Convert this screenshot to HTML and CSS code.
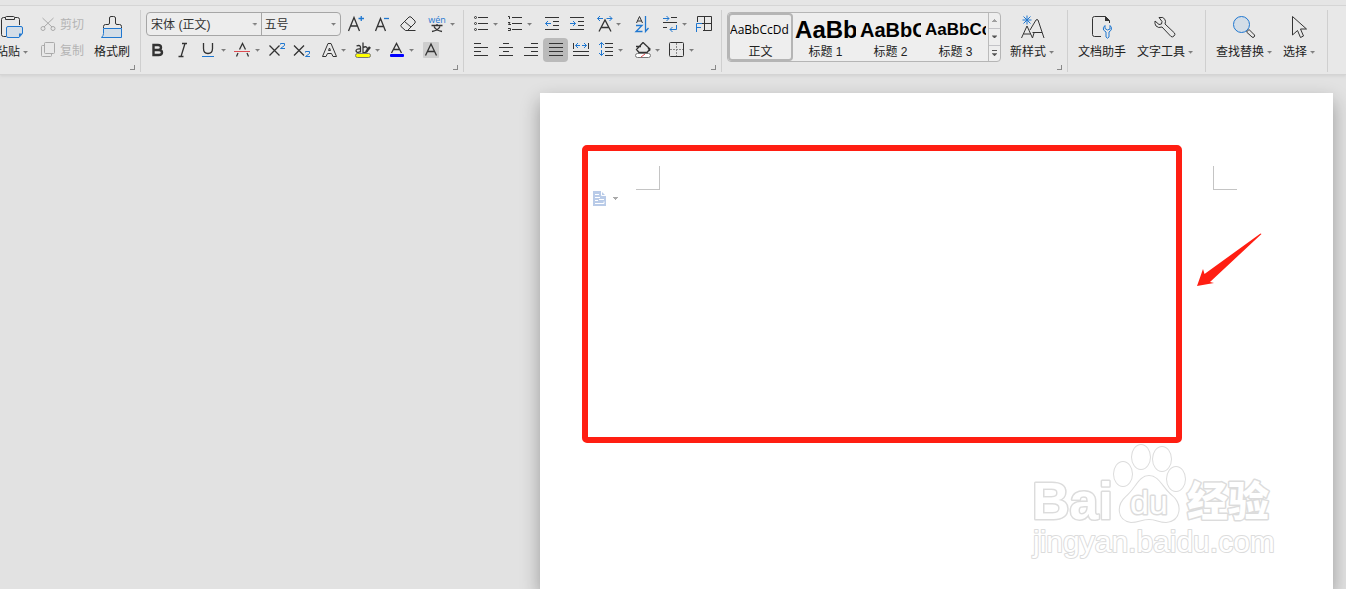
FILE: index.html
```html
<!DOCTYPE html>
<html lang="zh-CN">
<head>
<meta charset="utf-8">
<meta name="viewport" content="width=device-width, initial-scale=1">
<title>文字文稿</title>
<link rel="stylesheet" href="styles.css">
</head>
<body>
<header class="ribbon">
  <section class="group group-clipboard" aria-label="剪贴板">
    <button class="big paste" type="button">
      <svg class="icon-big" viewBox="0 0 24 24"><path d="M5.500 2.500H3.500Q1.500 2.500 1.500 4.500V19.500Q1.500 21.500 3.500 21.500H6M15 2.500H17.500Q19.500 2.500 19.500 4.500V10"/><path d="M5.500 4.500V2.500Q5.500 1.500 6.500 1.500H13.500Q14.500 1.500 14.500 2.500V4.500Z"/><path class="blue tint" d="M8 11.500H21Q22.500 11.500 22.500 13V18.500L19 22.500H8Q6.500 22.500 6.500 21V13Q6.500 11.500 8 11.500Z"/><path class="blue-fill" d="M19 22.500V18.500H22.500Z"/></svg>
      <span class="label">粘贴<i class="caret"></i></span>
    </button>
    <div class="rows">
      <button class="text-tool" type="button" disabled>
        <svg class="icon" viewBox="0 0 20 20"><path d="M4.500 4L14 13M15.500 4L6 13"/><circle cx="5" cy="14.500" r="2"/><circle cx="15" cy="14.500" r="2"/></svg><span>剪切</span>
      </button>
      <button class="text-tool" type="button" disabled>
        <svg class="icon" viewBox="0 0 20 20"><rect x="6.500" y="2.500" width="10" height="11" rx="1"/><path d="M6 5.500H4.500Q3.500 5.500 3.500 6.500V15.500Q3.500 16.500 4.500 16.500H12.500Q13.500 16.500 13.500 15.500V14"/></svg><span>复制</span>
      </button>
    </div>
    <button class="big" type="button">
      <svg class="icon-big" viewBox="0 0 24 24"><path d="M3.500 13V11.500Q3.500 9.500 5.500 9.500H8Q9.500 9.500 9.500 8V3Q9.500 1.500 11 1.500H13.500Q15.500 1.500 15.500 3V8Q15.500 9.500 17 9.500H19.500Q21.500 9.500 21.500 11.500V13"/><path class="blue tint" d="M3.500 13.500H21.500V22.500H1.500Q3.500 20.500 3.500 18.500Z"/></svg>
      <span class="label">格式刷</span>
    </button>
    <button class="launcher" type="button" aria-label="剪贴板选项"></button>
  </section>

  <section class="group group-font" aria-label="字体">
    <div class="rows">
      <div class="row">
        <div class="combo">
          <label class="field field-name"><select aria-label="字体"><option>宋体 (正文)</option></select><i class="caret"></i></label>
          <label class="field field-size"><select aria-label="字号"><option>五号</option></select><i class="caret"></i></label>
        </div>
        <button class="tool" type="button" aria-label="增大字号"><svg class="icon" viewBox="0 0 20 20"><path class="thick" d="M2.500 17L8 3.500L13.500 17M4.500 12H11.500"/><path class="blue thick" d="M12.500 4.500H18M15.250 2V7"/></svg></button>
        <button class="tool" type="button" aria-label="减小字号"><svg class="icon" viewBox="0 0 20 20"><path class="thick" d="M3.500 17L8.500 4.500L13.500 17M5.500 12.500H11.500"/><path class="blue thick" d="M12 4.500H17"/></svg></button>
        <button class="tool" type="button" aria-label="清除格式"><svg class="icon" viewBox="0 0 20 20"><path d="M3 11L11 3Q12 2.500 13 3L17 7Q17.500 8 17 9L9.500 16.500H7.500L3 12.500Q2.500 11.500 3 11ZM6.500 7.500L13 13M8 16.500H17.500"/></svg></button>
        <button class="tool tool-wide" type="button" aria-label="拼音指南"><svg class="icon" viewBox="0 0 24 20"><text class="pinyin" x="13" y="9" text-anchor="middle">wén</text><path class="thick" d="M7.500 11.500H18.500M13 10V12M10 12.500Q12 16.500 18 17.500M16 12.500Q14 16.500 8 17.500"/></svg><i class="caret"></i></button>
      </div>
      <div class="row">
        <button class="tool" type="button" aria-label="加粗"><svg class="icon" viewBox="0 0 20 20"><path class="bold" d="M6.500 5H11Q14 5 14 7.500T11 10H6.500ZM6.500 10H11.500Q15 10 15 12.500T11.500 15H6.500Z"/></svg></button>
        <button class="tool" type="button" aria-label="倾斜"><svg class="icon" viewBox="0 0 20 20"><path class="thick" d="M9 3.500H14M5.500 16.500H10.500M12 3.500L8 16.500"/></svg></button>
        <button class="tool" type="button" aria-label="下划线"><svg class="icon" viewBox="0 0 20 20"><path class="thick" d="M4.500 3V8.500Q4.500 13.500 9 13.500T13.500 8.500V3"/><path class="blue" d="M3 16.500H15"/></svg><i class="caret"></i></button>
        <button class="tool" type="button" aria-label="删除线"><svg class="icon" viewBox="0 0 20 20"><path class="thick" d="M6.500 9.500L9.500 3.500L12.500 9.500M5 13L3.500 16.500M14 13L15.500 16.500"/><path class="red" d="M1 11.500H17"/></svg><i class="caret"></i></button>
        <button class="tool" type="button" aria-label="上标"><svg class="icon" viewBox="0 0 20 20"><path class="thick" d="M2.500 5.500L12.500 15.500M12.500 5.500L2.500 15.500"/><path class="blue" d="M13.500 4.500V3.500H17.500V5.500L13.500 8.500H18"/></svg></button>
        <button class="tool" type="button" aria-label="下标"><svg class="icon" viewBox="0 0 20 20"><path class="thick" d="M1 5.500L11 15.500M11 5.500L1 15.500"/><path class="blue" d="M12.500 12.500V11.500H16.500V13.500L12.500 16.500H17"/></svg></button>
        <button class="tool" type="button" aria-label="文字效果"><svg class="icon" viewBox="0 0 20 20"><path d="M3.500 16.500L9 3.500H12L17.500 16.500H14L12.500 13.500H8.500L7 16.500ZM9.500 10.500L10.500 8L11.500 10.500Z"/></svg><i class="caret"></i></button>
        <button class="tool" type="button" aria-label="突出显示"><svg class="icon" viewBox="0 0 20 20"><path class="thick" d="M3.500 6Q7.500 4.500 7.500 7.500V12.500M7.500 9Q3 8.500 3 11Q4 13.500 7.500 11.500M10 2.500V12.500Q14.500 13 14.500 9Q14 5.500 10 7.500"/><path class="bold" d="M13 12L17 7"/><rect class="mark" x="2.500" y="13.500" width="15" height="4" rx="2"/></svg><i class="caret"></i></button>
        <button class="tool" type="button" aria-label="字体颜色"><svg class="icon" viewBox="0 0 20 20"><path class="thick" d="M4.500 13L9.500 3.500L14.500 13M6.500 9.500H12.500"/><rect class="ink" x="3" y="14" width="14" height="3" rx="1"/></svg><i class="caret"></i></button>
        <button class="tool" type="button" aria-label="字符底纹"><svg class="icon" viewBox="0 0 20 20"><rect class="shade" x="2" y="2" width="16" height="16" rx="1"/><path class="thick" d="M4.500 15.500L10 4L15.500 15.500M6.500 11.500H13.500"/></svg></button>
      </div>
    </div>
    <button class="launcher" type="button" aria-label="字体选项"></button>
  </section>

  <section class="group group-para" aria-label="段落">
    <div class="rows">
      <div class="row">
        <button class="tool" type="button" aria-label="项目符号"><svg class="icon" viewBox="0 0 20 20"><path d="M7 3.500H17M7 9.500H17M7 15.500H17"/><circle cx="4.500" cy="3.500" r="1"/><circle cx="4.500" cy="9.500" r="1"/><circle cx="4.500" cy="15.500" r="1"/></svg><i class="caret"></i></button>
        <button class="tool" type="button" aria-label="编号"><svg class="icon" viewBox="0 0 20 20"><path d="M7 3.500H17M7 9.500H17M7 15.500H17M3 2.500H4.500V5M3 8.500H5L3.500 10.500H6M3 14.500H5.500V16.500H3"/></svg><i class="caret"></i></button>
        <button class="tool apart" type="button" aria-label="减少缩进"><svg class="icon" viewBox="0 0 20 20"><path d="M3 3.500H17M11 7.500H17M11 11.500H17M3 15.500H17"/><path class="blue" d="M3.500 9.500H9M6 7L3.500 9.500L6 12"/></svg></button>
        <button class="tool" type="button" aria-label="增加缩进"><svg class="icon" viewBox="0 0 20 20"><path d="M2 3.500H16M10 7.500H16M10 11.500H16M2 15.500H16"/><path class="blue" d="M2 9.500H7.500M5 7L7.500 9.500L5 12"/></svg></button>
        <button class="tool" type="button" aria-label="中文版式"><svg class="icon" viewBox="0 0 20 20"><path class="thick" d="M5 17.500L11 6L17 17.500M7 13.500H15"/><path class="blue" d="M3.500 4.500H9M6 2L3.500 4.500L6 7M12.500 4.500H18M15.500 2L18 4.500L15.500 7"/></svg><i class="caret"></i></button>
        <button class="tool apart" type="button" aria-label="排序"><svg class="icon" viewBox="0 0 20 20"><path d="M5.500 9L8.500 2.500L11.500 9M6.500 7H10.500"/><path class="blue thick" d="M5 11.500H11L5 17.500H11.500M14.500 2V17.500L17.500 14"/></svg></button>
        <button class="tool apart" type="button" aria-label="显示标记"><svg class="icon" viewBox="0 0 20 20"><path d="M11 3.500H17M3 8.500H17M3 13.500H7"/><path class="blue" d="M3 4.500H9M6.500 2L9 4.500L6.500 7M16.500 11V15.500H10M12.500 13L10 15.500L12.500 18"/></svg><i class="caret"></i></button>
        <button class="tool" type="button" aria-label="制表位"><svg class="icon" viewBox="0 0 20 20"><path d="M3.500 8V2.500H17.500V16.500H9M10.500 2.500V16.500M8 9.500H17.500"/><path class="blue" d="M2.500 18V9.500H8M2.500 13.500H7"/></svg></button>
      </div>
      <div class="row">
        <button class="tool narrow" type="button" aria-label="左对齐"><svg class="icon" viewBox="0 0 20 20"><path d="M3 3.500H10M3 7.500H17M3 11.500H10M3 15.500H17"/></svg></button>
        <button class="tool narrow" type="button" aria-label="居中"><svg class="icon" viewBox="0 0 20 20"><path d="M7 3.500H13M3 7.500H17M7 11.500H13M3 15.500H17"/></svg></button>
        <button class="tool narrow" type="button" aria-label="右对齐"><svg class="icon" viewBox="0 0 20 20"><path d="M10 3.500H17M3 7.500H17M10 11.500H17M3 15.500H17"/></svg></button>
        <button class="tool narrow active" type="button" aria-label="两端对齐" aria-pressed="true"><svg class="icon" viewBox="0 0 20 20"><path d="M3 3.500H17M3 7.500H17M3 11.500H17M3 15.500H17"/></svg></button>
        <button class="tool narrow" type="button" aria-label="分散对齐"><svg class="icon" viewBox="0 0 20 20"><path d="M2.500 3V9M17.500 3V9M2 11.500H18M2 15.500H18"/><path class="blue" d="M4.500 5.500H9M7 3L4.500 5.500L7 8M11 5.500H15.500M13 3L15.500 5.500L13 8"/></svg></button>
        <button class="tool" type="button" aria-label="行距"><svg class="icon" viewBox="0 0 20 20"><path d="M9 3.500H17M9 7.500H17M9 11.500H17M9 15.500H17"/><path class="blue" d="M5.500 2.500V8M3 5L5.500 2.500L8 5M5.500 10V15.500M3 13L5.500 15.500L8 13"/></svg><i class="caret"></i></button>
        <button class="tool apart" type="button" aria-label="底纹颜色"><svg class="icon" viewBox="0 0 20 20"><path class="thick" d="M3 6.500H8M10 2.500L17 9L14 12.500H6L3.500 9.500L10 2.500M15 8L17 11"/><rect class="nofill" x="2.500" y="13.500" width="15" height="4" rx="2"/><path class="red" d="M8 17L12 14"/></svg><i class="caret"></i></button>
        <button class="tool" type="button" aria-label="边框"><svg class="icon" viewBox="0 0 20 20"><rect x="2.500" y="2.500" width="14" height="14" rx="1"/><path class="dash" d="M9.500 3V16M3 9.500H16"/></svg><i class="caret"></i></button>
      </div>
    </div>
    <button class="launcher" type="button" aria-label="段落选项"></button>
  </section>

  <section class="group group-styles" aria-label="样式">
    <div class="gallery">
      <button class="style selected" type="button"><span class="sample sample-body">AaBbCcDd</span><span class="style-name">正文</span></button>
      <button class="style" type="button"><span class="sample sample-h1">AaBb</span><span class="style-name">标题 1</span></button>
      <button class="style" type="button"><span class="sample sample-h2">AaBbC</span><span class="style-name">标题 2</span></button>
      <button class="style" type="button"><span class="sample sample-h3">AaBbCc</span><span class="style-name">标题 3</span></button>
      <div class="scroller">
        <button type="button" disabled aria-label="上一行"><i class="caret caret-up"></i></button>
        <button type="button" aria-label="下一行"><i class="caret"></i></button>
        <button type="button" class="more" aria-label="更多样式"><i class="caret"></i></button>
      </div>
    </div>
    <button class="big" type="button">
      <svg class="icon-big" viewBox="0 0 24 24"><path d="M1.500 23L7 11L12.500 23M3.500 19H10.500M10 15L16 5Q17 4 18 5L24 23M12.500 17.500H22M12.500 23L14 18"/><path class="blue" d="M7 .5V9.500M2.500 5H11.500M3.500 1.500L10.500 8.500M10.500 1.500L3.500 8.500"/></svg>
      <span class="label">新样式<i class="caret"></i></span>
    </button>
    <button class="launcher" type="button" aria-label="样式选项"></button>
  </section>

  <section class="group group-tools" aria-label="工具">
    <button class="big" type="button">
      <svg class="icon-big" viewBox="0 0 24 24"><path d="M11 21.500H4.500Q2.500 21.500 2.500 19.500V3.500Q2.500 1.500 4.500 1.500H15.500L19.500 5.500V8"/><path class="dark" d="M15 1V6H20Z"/><path class="blue" d="M15 10.500Q12.500 12.500 13.500 15L16 17V22Q17.500 24.500 19 22V17Q22 15.500 21.500 12.500L20 10.500V14L17.500 15L15 13.500Z"/></svg>
      <span class="label">文档助手</span>
    </button>
    <button class="big" type="button">
      <svg class="icon-big" viewBox="0 0 24 24"><path d="M6 2.500Q10.500 1.500 12 4.500Q13 6.500 12 9L21.500 18Q22.500 19.500 21 21Q19.500 22.500 18 21.500L9 12Q5.500 13.500 3 11Q1.500 9 2 6L6 9.500L8.500 9L9 6.500Z"/></svg>
      <span class="label">文字工具<i class="caret"></i></span>
    </button>
  </section>

  <section class="group group-edit" aria-label="编辑">
    <button class="big" type="button">
      <svg class="icon-big" viewBox="0 0 24 24"><circle class="blue tint" cx="9.500" cy="9.500" r="8"/><path d="M14.500 17L17 14.500L22.500 20Q23 21 22 22Q21 23 20 22Z"/></svg>
      <span class="label">查找替换<i class="caret"></i></span>
    </button>
    <button class="big" type="button">
      <svg class="icon-big" viewBox="0 0 24 24"><path d="M5.500 1.500L19.500 14H13.500L16.500 21L13.500 22.500L10.500 15.500L5.500 20Z"/></svg>
      <span class="label">选择<i class="caret"></i></span>
    </button>
  </section>
</header>

<main class="workspace">
  <article class="page">
    <i class="margin-mark mark-left"></i>
    <i class="margin-mark mark-right"></i>
    <button class="page-menu" type="button" aria-label="段落布局">
      <svg class="page-icon" viewBox="0 0 13 15"><path class="sheet" d="M0 0H8L13 5V15H0Z"/><path class="cut" d="M8.500 0V4.500H13M2 3.500H6M2 6.500H7M2 9.500H5M6 8.500H11M2 12.500H11V10.500"/></svg><i class="caret"></i>
    </button>
    <div class="callout"></div>
    <svg class="arrow" viewBox="0 0 66 54"><path d="M64.500 .5L65.500 1L14 49L18 50L1 53L7 36L8.500 41Z"/></svg>
    <svg class="watermark" viewBox="0 0 250 120">
      <text class="wm-bai" x="2" y="78">Bai</text>
      <g class="wm-paw"><ellipse cx="93" cy="33" rx="9" ry="12"/><ellipse cx="111" cy="16" rx="9" ry="12"/><ellipse cx="132" cy="18" rx="9" ry="12"/><ellipse cx="146" cy="38" rx="9" ry="12"/><path d="M119 35C129 35 132 47 142 55C152 63 151 80 136 81C129 81 126 78 119 78S108 81 101 81C87 79 87 64 96 56C106 48 109 35 119 35Z"/></g>
      <text class="wm-du" x="100" y="73">du</text>
      <text class="wm-cn" x="157" y="75">经验</text>
      <text class="wm-url" x="3" y="111">jingyan.baidu.com</text>
    </svg>
  </article>
</main>
</body>
</html>
```

FILE: styles.css
```css
* { box-sizing: border-box; }

body {
  margin: 0;
  min-height: 100vh;
  display: flex;
  flex-direction: column;
  overflow: hidden;
  background: #e2e2e2;
  color: #222;
  font: 12px/16px "Liberation Sans", "Noto Sans CJK SC", sans-serif;
}

button {
  margin: 0;
  padding: 0;
  border: 0;
  background: none;
  color: inherit;
  font: inherit;
}

svg {
  display: block;
  flex: none;
  overflow: visible;
  fill: none;
  stroke: #333;
}

.blue { stroke: #1f77d0; }
.red { stroke: #dc4b50; }
.thick { stroke-width: 1.3; }
.bold { stroke-width: 2.4; }
.tint { fill: #d3dde7; }
.blue-fill { fill: #1f77d0; stroke: none; }
.dark { fill: #333; stroke: none; }
.mark { fill: #ff0; stroke: #777; }
.ink { fill: #00f; stroke: none; }
.shade { fill: #cecece; stroke: none; }
.nofill { fill: #fff; stroke: #777; }
.dash { stroke: #888; stroke-dasharray: 2 1; }
.pinyin { fill: #1f77d0; stroke: none; font: 9px "Open Sans", sans-serif; }

.caret {
  flex: none;
  width: 5px;
  height: 3px;
  background: #7d7d7d;
  clip-path: polygon(0 0, 100% 0, 100% 33%, 80% 33%, 80% 67%, 60% 67%, 60% 100%, 40% 100%, 40% 67%, 20% 67%, 20% 33%, 0 33%);
}
.caret-up { transform: rotate(180deg); }

/* Ribbon */
.ribbon {
  display: flex;
  padding: 5px 0 2px;
  border-top: 5px solid #e5e5e5;
  background: linear-gradient(#d5d5d5 1px, #e8e8e8 1px);
  border-bottom: 1px solid #d4d4d4;
  box-shadow: 0 1px 3px #d0d0d0;
  flex: none;
}
.group {
  position: relative;
  display: flex;
  align-items: flex-start;
  flex: none;
  height: 62px;
  border-right: 1px solid #cfcfcf;
}
.group-clipboard { gap: 10px; padding-right: 10px; }
.group-font { padding: 0 4px 0 3px; }
.group-para { padding: 0 4px; }
.group-styles { gap: 9px; padding: 0 13px 0 5px; }
.group-tools, .group-edit { gap: 11px; padding: 0 12px 0 10px; }

.big {
  display: flex;
  flex-direction: column;
  align-items: center;
  gap: 5px;
  padding-top: 5px;
}
.paste { margin-left: -4px; }
.icon-big { width: 24px; height: 24px; }
.label { display: flex; align-items: center; gap: 3px; white-space: nowrap; }

.rows { display: flex; flex-direction: column; gap: 2px; padding-top: 2px; }
.row { display: flex; height: 24px; }
.text-tool { display: flex; align-items: center; gap: 2px; height: 24px; color: #b4b4b4; }
.text-tool svg { stroke: #aaa; }
.text-tool span { padding-top: 2px; }
.icon { width: 20px; height: 20px; }

.tool { display: flex; align-items: center; gap: 2px; width: 26px; padding: 0 3px; border-radius: 4px; }
.tool:has(.caret) { width: 34px; }
.tool-wide:has(.caret) { width: 38px; }
.tool-wide .icon { width: 24px; }
.narrow { width: 25px; }
.apart { margin-left: 3px; }
.active { background: #bababa; }

.launcher {
  position: absolute;
  right: 5px;
  bottom: 2px;
  width: 5px;
  height: 5px;
  border: solid #888;
  border-width: 0 1px 1px 0;
}

.combo {
  display: flex;
  width: 195px;
  margin: 0 2px;
  border: 1px solid #a6a6a6;
  border-radius: 4px;
  background: #ededed;
}
.field { display: flex; align-items: center; padding-right: 4px; }
.field-name { flex: 3; border-right: 1px solid #a6a6a6; }
.field-size { flex: 2; }
.field select {
  flex: 1;
  min-width: 0;
  padding: 2px 0 0 4px;
  border: 0;
  appearance: none;
  background: none;
  color: #333;
  font: inherit;
}
.field-size select { padding-left: 2px; }

/* Style gallery */
.gallery {
  display: flex;
  width: 274px;
  height: 50px;
  margin-top: 2px;
  border: 1px solid #b5b5b5;
  border-radius: 4px;
  background: #eee;
}
.style {
  display: flex;
  flex-direction: column;
  flex: 1;
  min-width: 0;
  padding: 4px 2px 0;
  border-radius: 4px;
}
.selected { box-shadow: inset 0 0 0 2px #b5b5b5; }
.sample {
  height: 27px;
  width: 100%;
  overflow: hidden;
  color: #000;
  line-height: 26px;
  text-align: left;
  white-space: nowrap;
}
.sample-body { font-family: "Open Sans", sans-serif; }
.sample-h1 { font-size: 24px; font-weight: bold; }
.sample-h2 { font-size: 20px; font-weight: bold; }
.sample-h3 { font-size: 17px; font-weight: bold; }
.style-name { width: 100%; text-align: center; }

.scroller { display: flex; flex-direction: column; width: 12px; border-left: 1px solid #bbb; }
.scroller button {
  display: flex;
  flex: 1;
  flex-direction: column;
  align-items: center;
  justify-content: center;
  gap: 2px;
}
.scroller button + button { border-top: 1px solid #c4c4c8; }
.scroller button:disabled { opacity: .5; }
.more::before { content: ""; width: 5px; height: 1px; background: #555; }
.scroller .caret { background: #555; }

/* Document */
.workspace { display: flex; flex: 1; padding: 18px 13px 0 540px; }
.page {
  position: relative;
  flex: 1;
  background: #fff;
  box-shadow: 0 8px 18px rgba(0, 0, 0, .32);
}
.margin-mark { position: absolute; top: 73px; width: 24px; height: 24px; border: solid #c4c4c4; }
.mark-left { left: 96px; border-width: 0 1px 1px 0; }
.mark-right { right: 96px; border-width: 0 0 1px 1px; }
.page-menu { position: absolute; left: 53px; top: 98px; display: flex; align-items: center; gap: 7px; }
.page-icon { width: 13px; height: 15px; }
.sheet { fill: #b9cbe8; stroke: none; }
.cut { stroke: #fff; }
.page-menu .caret { background: #aaa; }
.callout {
  position: absolute;
  left: 42px;
  right: 151px;
  top: 52px;
  height: 298px;
  border: 6px solid #ff1e12;
  border-radius: 5px;
}
.arrow { position: absolute; right: 71px; top: 140px; width: 66px; height: 54px; fill: #ff1e12; stroke: none; }

.watermark {
  position: absolute;
  right: 53px;
  top: 348px;
  width: 250px;
  height: 120px;
  fill: #fff;
  stroke: #dcdcdc;
  paint-order: stroke;
  stroke-width: 3;
  stroke-linejoin: round;
}
.wm-paw { stroke-width: 2; }
.wm-bai { font: bold 52px "Liberation Sans", sans-serif; }
.wm-du { font: 34px "Liberation Sans", sans-serif; }
.wm-cn { font: 900 41px "Noto Sans CJK SC", sans-serif; }
.wm-url { font: 30px "Liberation Sans", sans-serif; stroke-width: 2; }
```
